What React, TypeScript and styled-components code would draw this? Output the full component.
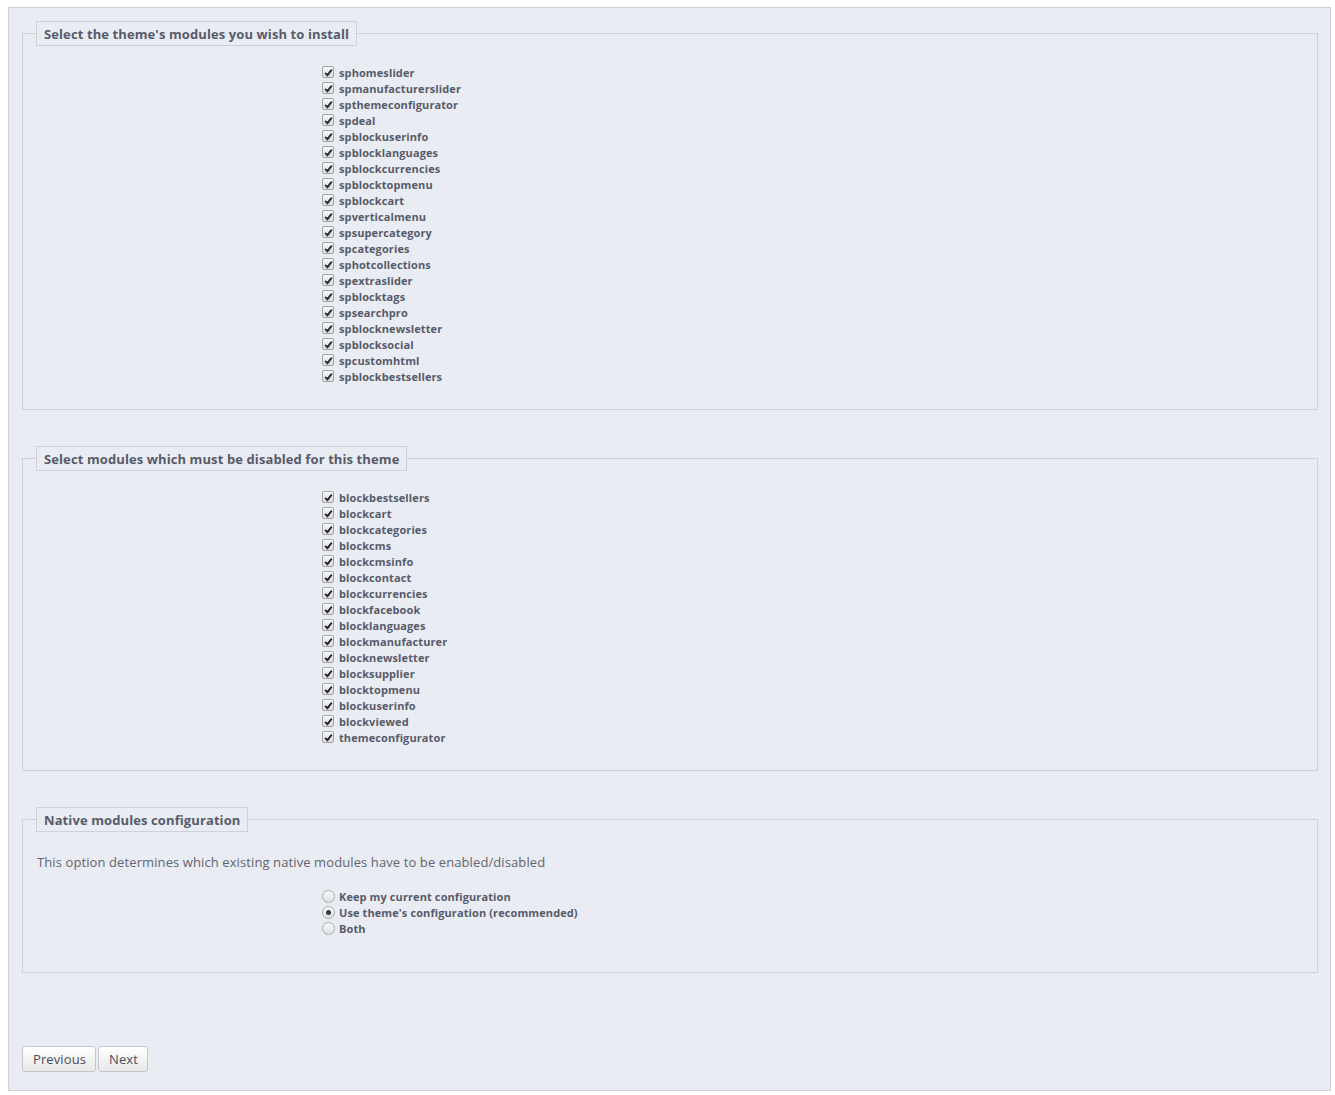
import React, { useState } from 'react';
import styled, { createGlobalStyle } from 'styled-components';

const installModules = [
	'sphomeslider',
	'spmanufacturerslider',
	'spthemeconfigurator',
	'spdeal',
	'spblockuserinfo',
	'spblocklanguages',
	'spblockcurrencies',
	'spblocktopmenu',
	'spblockcart',
	'spverticalmenu',
	'spsupercategory',
	'spcategories',
	'sphotcollections',
	'spextraslider',
	'spblocktags',
	'spsearchpro',
	'spblocknewsletter',
	'spblocksocial',
	'spcustomhtml',
	'spblockbestsellers'
];

const disableModules = [
	'blockbestsellers',
	'blockcart',
	'blockcategories',
	'blockcms',
	'blockcmsinfo',
	'blockcontact',
	'blockcurrencies',
	'blockfacebook',
	'blocklanguages',
	'blockmanufacturer',
	'blocknewsletter',
	'blocksupplier',
	'blocktopmenu',
	'blockuserinfo',
	'blockviewed',
	'themeconfigurator'
];

const configOptions = [
	{ value: 'keep', label: 'Keep my current configuration' },
	{ value: 'theme', label: "Use theme's configuration (recommended)" },
	{ value: 'both', label: 'Both' }
];

const CheckList = (props: { items: string[] }) => {
	const [checked, setChecked] = useState<Record<string, boolean>>(
		Object.fromEntries(props.items.map(item => [item, true]))
	);

	return (
		<OptionList>
			{props.items.map(item => (
				<OptionRow key={item} onClick={() => setChecked({ ...checked, [item]: !checked[item] })}>
					<CheckBox>
						{checked[item] ? (
							<svg width='9' height='9' viewBox='0 0 9 9'>
								<path d='M1.2 4.8 L3.4 7.2 L7.8 1.6' fill='none' stroke='#2b2b2b' strokeWidth='1.9' />
							</svg>
						) : null}
					</CheckBox>
					<OptionLabel>{item}</OptionLabel>
				</OptionRow>
			))}
		</OptionList>
	);
};

const App = () => {
	const [config, setConfig] = useState('theme');

	return (
		<>
			<GlobalStyle />
			<Wrapper>
				<Fieldset>
					<Legend>Select the theme's modules you wish to install</Legend>
					<CheckList items={installModules} />
				</Fieldset>

				<Fieldset>
					<Legend>Select modules which must be disabled for this theme</Legend>
					<CheckList items={disableModules} />
				</Fieldset>

				<Fieldset spaced>
					<Legend>Native modules configuration</Legend>
					<Hint>This option determines which existing native modules have to be enabled/disabled</Hint>
					<OptionList>
						{configOptions.map(option => (
							<OptionRow key={option.value} radio onClick={() => setConfig(option.value)}>
								<Radio>{config === option.value ? <RadioDot /> : null}</Radio>
								<OptionLabel>{option.label}</OptionLabel>
							</OptionRow>
						))}
					</OptionList>
				</Fieldset>

				<ButtonBar>
					<Button>Previous</Button>
					<Button>Next</Button>
				</ButtonBar>
			</Wrapper>
		</>
	);
};

export default App;

const GlobalStyle = createGlobalStyle`
	body {
		margin: 7px 4px 5px 8px;
		background: #fff;
		font-family: 'Open Sans', 'DejaVu Sans', sans-serif;
	}
`;
const Wrapper = styled.div`
	width: 1323px;
	box-sizing: border-box;
	padding: 13px 12px 18px 13px;
	background: #e9ecf3;
	border: 1px solid #cfd1da;
	min-height: 1084px;
	display: flex;
	flex-direction: column;
`;
const Fieldset = styled.fieldset<{ spaced?: boolean }>`
	margin: 0 0 36px 0;
	padding: 18px 0 ${props => (props.spaced ? '36px' : '25px')} 13px;
	border: 1px solid #cfd1da;
	min-width: 0;
`;
const Legend = styled.legend`
	padding: 4px 7px 2px;
	border: 1px solid #cfd1da;
	font-size: 13px;
	line-height: 17px;
	font-weight: 700;
	letter-spacing: 0.1px;
	color: #575b6a;
`;
const Hint = styled.p`
	margin: 3px 0 17px 1px;
	font-size: 13px;
	line-height: 18px;
	letter-spacing: 0.1px;
	color: #62656f;
`;
const OptionList = styled.div`
	display: flex;
	flex-direction: column;
	padding-left: 286px;
`;
const OptionRow = styled.label<{ radio?: boolean }>`
	display: flex;
	align-items: center;
	gap: ${props => (props.radio ? '4px' : '5px')};
	height: 16px;
	cursor: pointer;
`;
const CheckBox = styled.span`
	width: 10px;
	height: 10px;
	border: 1px solid #a3a5ad;
	border-radius: 2px;
	background: linear-gradient(#f8f8f8, #dcdcdc);
	display: flex;
	align-items: center;
	justify-content: center;
`;
const Radio = styled.span`
	width: 11px;
	height: 11px;
	border: 1px solid #a9abb2;
	border-radius: 50%;
	background: linear-gradient(#fbfbfb, #dedede);
	display: flex;
	align-items: center;
	justify-content: center;
`;
const RadioDot = styled.span`
	width: 5px;
	height: 5px;
	border-radius: 50%;
	background: #3a3a3a;
`;
const OptionLabel = styled.span`
	font-size: 11px;
	font-weight: 700;
	color: #575b6a;
	letter-spacing: 0.1px;
`;
const ButtonBar = styled.div`
	margin-top: auto;
	display: flex;
	gap: 2px;
`;
const Button = styled.button`
	height: 26px;
	padding: 0 9px 0 10px;
	font-family: 'Open Sans', 'DejaVu Sans', sans-serif;
	font-size: 13px;
	letter-spacing: 0.1px;
	color: #4b4e5b;
	background: linear-gradient(#ffffff, #e8e8e8);
	border: 1px solid #c6c7cc;
	border-radius: 3px;
	cursor: pointer;
`;
